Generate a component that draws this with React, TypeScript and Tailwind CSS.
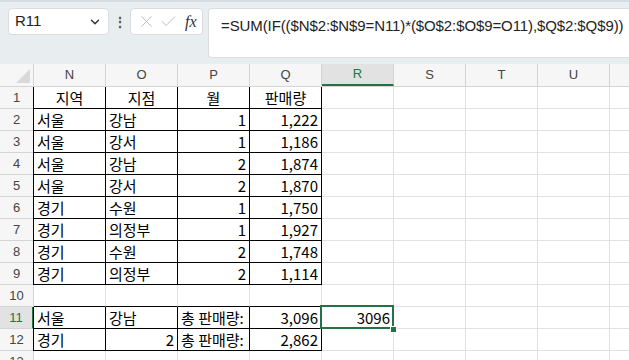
import { ChevronDown, X, Check } from "lucide-react"

const cols = ["N", "O", "P", "Q", "R", "S", "T", "U", ""]

type Cell = { v: string; align?: "left" | "right" | "center" }

const rows: Cell[][] = [
    [{ v: "지역", align: "center" }, { v: "지점", align: "center" }, { v: "월", align: "center" }, { v: "판매량", align: "center" }],
    [{ v: "서울" }, { v: "강남" }, { v: "1", align: "right" }, { v: "1,222", align: "right" }],
    [{ v: "서울" }, { v: "강서" }, { v: "1", align: "right" }, { v: "1,186", align: "right" }],
    [{ v: "서울" }, { v: "강남" }, { v: "2", align: "right" }, { v: "1,874", align: "right" }],
    [{ v: "서울" }, { v: "강서" }, { v: "2", align: "right" }, { v: "1,870", align: "right" }],
    [{ v: "경기" }, { v: "수원" }, { v: "1", align: "right" }, { v: "1,750", align: "right" }],
    [{ v: "경기" }, { v: "의정부" }, { v: "1", align: "right" }, { v: "1,927", align: "right" }],
    [{ v: "경기" }, { v: "수원" }, { v: "2", align: "right" }, { v: "1,748", align: "right" }],
    [{ v: "경기" }, { v: "의정부" }, { v: "2", align: "right" }, { v: "1,114", align: "right" }],
    [],
    [{ v: "서울" }, { v: "강남" }, { v: "총 판매량:" }, { v: "3,096", align: "right" }, { v: "3096", align: "right" }],
    [{ v: "경기" }, { v: "2", align: "right" }, { v: "총 판매량:" }, { v: "2,862", align: "right" }],
    [],
]

// rows (1-based) with black borders over N..Q
const boxed = (r: number) => (r >= 1 && r <= 9) || r === 11 || r === 12

const App = () => {
    return (
        <div className="w-[629px] h-[360px] overflow-hidden bg-white" style={{ fontFamily: '"Noto Sans CJK KR", "Noto Sans", sans-serif' }}>
            {/* formula bar */}
            <div className="h-[64px] bg-[#e8edf0] border-t-[2px] border-[#d6dce0] flex items-start pt-[6px] pl-[8px] gap-[5px]">
                <div className="w-[101px] shrink-0 h-[27px] bg-white rounded-[4px] border border-[#d9dde0] flex items-center justify-between pl-[6px] pr-[6px]">
                    <span className="text-[15px] text-[#222]" style={{ fontFamily: '"Liberation Sans", sans-serif' }}>R11</span>
                    <ChevronDown size={14} strokeWidth={2.5} className="text-[#333]" />
                </div>
                <div className="w-[11px] shrink-0 h-[27px] flex items-center justify-center text-[#555] text-[14px] font-bold">⋮</div>
                <div className="w-[73px] shrink-0 h-[27px] bg-white rounded-[4px] border border-[#d9dde0] flex items-center pl-[6px] gap-[3px]">
                    <X size={19} strokeWidth={1.2} className="text-[#bbb]" />
                    <Check size={19} strokeWidth={1.2} className="text-[#bbb]" />
                    <span className="ml-[4px] text-[16px] italic text-[#333]" style={{ fontFamily: '"Liberation Serif", serif' }}>fx</span>
                </div>
                <div className="flex-1 min-w-0 overflow-hidden h-[50px] bg-white rounded-l-[4px] border border-r-0 border-[#d9dde0] pl-[12px] pt-[3px]">
                    <span className="text-[15px] text-[#222] whitespace-nowrap tracking-[-0.1px]" style={{ fontFamily: '"Liberation Sans", sans-serif' }}>
                        =SUM(IF(($N$2:$N$9=N11)*($O$2:$O$9=O11),$Q$2:$Q$9))
                    </span>
                </div>
            </div>

            {/* column headers */}
            <div className="flex h-[23px] bg-[#f6f6f6] border-b border-[#d4d4d4]">
                <div className="w-[34px] shrink-0 border-r border-[#d4d4d4] relative overflow-hidden">
                    <div className="absolute right-[3px] bottom-[3px] w-0 h-0 border-l-[14px] border-l-transparent border-b-[14px] border-b-[#d9d9d9]" />
                </div>
                {cols.map((c, ci) => (
                    <div
                        key={ci}
                        className={
                            c === "R"
                                ? "w-[72px] shrink-0 border-r border-[#d4d4d4] bg-[#e2e2e2] border-b-[2px] border-b-[#217346] text-[#217346] text-[13px] flex items-center justify-center"
                                : "w-[72px] shrink-0 border-r border-[#d4d4d4] text-[#444] text-[13px] flex items-center justify-center"
                        }
                        style={{ fontFamily: '"Liberation Sans", sans-serif' }}
                    >
                        {c}
                    </div>
                ))}
            </div>

            {/* grid */}
            <div className="relative">
                {rows.map((row, i) => {
                    const r = i + 1
                    return (
                        <div key={r} className="flex h-[22px]">
                            <div
                                className={
                                    r === 11
                                        ? "w-[34px] shrink-0 bg-[#e2e2e2] border-b border-[#d4d4d4] border-r-[2px] border-r-[#217346] text-[#217346] text-[13px] flex items-center justify-center"
                                        : "w-[34px] shrink-0 bg-[#f6f6f6] border-b border-[#d4d4d4] border-r border-r-[#d4d4d4] text-[#444] text-[13px] flex items-center justify-center"
                                }
                                style={{ fontFamily: '"Liberation Sans", sans-serif' }}
                            >
                                {r}
                            </div>
                            {cols.map((c, ci) => {
                                const cell = row[ci]
                                const inBox = boxed(r) && ci <= 3
                                const bottomBlack = inBox || (r === 10 && ci <= 3)
                                const leftBlack = inBox && ci === 0
                                const align =
                                    cell?.align === "right" ? "justify-end" : cell?.align === "center" ? "justify-center" : "justify-start"
                                return (
                                    <div
                                        key={ci}
                                        className={[
                                            "w-[72px] shrink-0 border-r border-b flex items-center px-[3px] text-[15px] text-black whitespace-nowrap leading-none",
                                            inBox ? "border-r-black" : "border-r-[#e1e1e1]",
                                            bottomBlack ? "border-b-black" : "border-b-[#e1e1e1]",
                                            leftBlack ? "border-l border-l-black -ml-[1px] w-[73px]" : "",
                                            align,
                                        ].join(" ")}
                                    >
                                        {cell?.v}
                                    </div>
                                )
                            })}
                        </div>
                    )
                })}
                {/* active cell R11 */}
                <div className="absolute left-[320px] top-[218px] w-[74px] h-[24px] border-[2px] border-[#217346] pointer-events-none" />
                <div className="absolute left-[390px] top-[239px] w-[7px] h-[7px] bg-[#217346] border border-white" />
            </div>
        </div>
    )
}

export default App
